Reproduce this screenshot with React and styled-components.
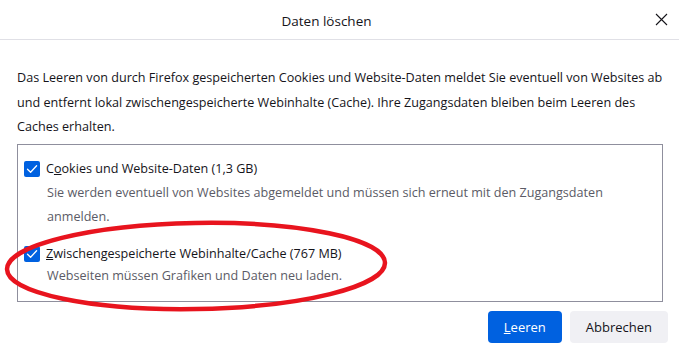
import React from "react";
import styled, { createGlobalStyle } from "styled-components";

const GlobalStyle = createGlobalStyle`
  html, body {
    margin: 0;
    padding: 0;
    background: #ffffff;
  }
  body {
    font-family: "Open Sans", "Noto Sans", "Liberation Sans", sans-serif;
    color: #15141a;
  }
`;

const Dialog = styled.div`
  position: relative;
  width: 679px;
  height: 348px;
  background: #ffffff;
  overflow: hidden;
`;

const Header = styled.div`
  height: 40px;
  border-bottom: 1px solid #e0e0e6;
  box-sizing: border-box;
  display: grid;
  grid-template-columns: 1fr auto 1fr;
  align-items: center;
`;

const Title = styled.h1`
  grid-column: 2;
  margin: 0 26px 0 0;
  font-size: 13.5px;
  font-weight: 400;
  padding-top: 2px;
`;

const CloseButton = styled.button`
  grid-column: 3;
  justify-self: end;
  margin-right: 6px;
  width: 24px;
  height: 24px;
  border: none;
  background: transparent;
  padding: 0;
  display: flex;
  align-items: center;
  justify-content: center;
  color: #15141a;
`;

const Body = styled.div`
  padding: 26px 16px 0 17px;
`;

const Intro = styled.p`
  margin: 0 0 4px;
  font-size: 12.6px;
  line-height: 24.5px;
`;

const OptionsBox = styled.div`
  height: 158px;
  box-sizing: border-box;
  border: 1px solid #8f8f9d;
  padding: 14px 6px 0;
  display: flex;
  flex-direction: column;
  gap: 15px;
`;

const Option = styled.div`
  display: flex;
  flex-direction: column;
`;

const OptionRow = styled.label`
  display: flex;
  align-items: center;
  gap: 6px;
  font-size: 12.6px;
  line-height: 20px;
`;

const Description = styled.div`
  padding-left: 23px;
  margin-top: ${(p) => p.$offset}px;
  font-size: 12.6px;
  line-height: 24px;
  color: #5b5b66;
`;

const Footer = styled.div`
  display: flex;
  justify-content: flex-end;
  gap: 8px;
  padding: 9px 11px 0 0;
`;

const Button = styled.button`
  height: 32px;
  padding: 0 16px;
  min-width: ${(p) => (p.$primary ? 72 : 98)}px;
  border: none;
  border-radius: 4px;
  font-family: inherit;
  font-size: 13px;
  background: ${(p) => (p.$primary ? "#0061e0" : "#f0f0f4")};
  color: ${(p) => (p.$primary ? "#ffffff" : "#15141a")};
`;

const Annotation = styled.svg`
  position: absolute;
  left: 0;
  top: 0;
  pointer-events: none;
`;

function CheckIcon() {
  return (
    <svg width="16" height="16" viewBox="0 0 16 16">
      <rect x="0" y="0" width="16" height="16" rx="2" fill="#0061e0" />
      <path
        d="M3.5 8.2 L6.6 11.2 L12.6 4.8"
        fill="none"
        stroke="#ffffff"
        strokeWidth="1.3"
        strokeLinecap="round"
        strokeLinejoin="round"
      />
    </svg>
  );
}

export default function App() {
  return (
    <>
      <GlobalStyle />
      <Dialog>
        <Header>
          <Title>Daten löschen</Title>
          <CloseButton aria-label="Schließen">
            <svg width="13" height="13" viewBox="0 0 13 13">
              <path d="M1 1 L12 12 M12 1 L1 12" stroke="#15141a" strokeWidth="1.1" />
            </svg>
          </CloseButton>
        </Header>
        <Body>
          <Intro>
            Das Leeren von durch Firefox gespeicherten Cookies und Website-Daten meldet Sie
            eventuell von Websites ab und entfernt lokal zwischengespeicherte Webinhalte
            (Cache). Ihre Zugangsdaten bleiben beim Leeren des Caches erhalten.
          </Intro>
          <OptionsBox>
            <Option>
              <OptionRow>
                <CheckIcon />
                <span>
                  C<u>o</u>okies und Website-Daten (1,3 GB)
                </span>
              </OptionRow>
              <Description $offset={2}>
                Sie werden eventuell von Websites abgemeldet und müssen sich erneut mit den
                Zugangsdaten anmelden.
              </Description>
            </Option>
            <Option>
              <OptionRow>
                <CheckIcon />
                <span>
                  <u>Z</u>wischengespeicherte Webinhalte/Cache (767 MB)
                </span>
              </OptionRow>
              <Description $offset={0}>
                Webseiten müssen Grafiken und Daten neu laden.
              </Description>
            </Option>
          </OptionsBox>
        </Body>
        <Footer>
          <Button $primary>
            <u>L</u>eeren
          </Button>
          <Button>Abbrechen</Button>
        </Footer>
        <Annotation width="679" height="348">
          <ellipse
            cx="196"
            cy="266"
            rx="189"
            ry="43"
            fill="none"
            stroke="#e8141e"
            strokeWidth="4.5"
            transform="rotate(-1 196 266)"
          />
        </Annotation>
      </Dialog>
    </>
  );
}
